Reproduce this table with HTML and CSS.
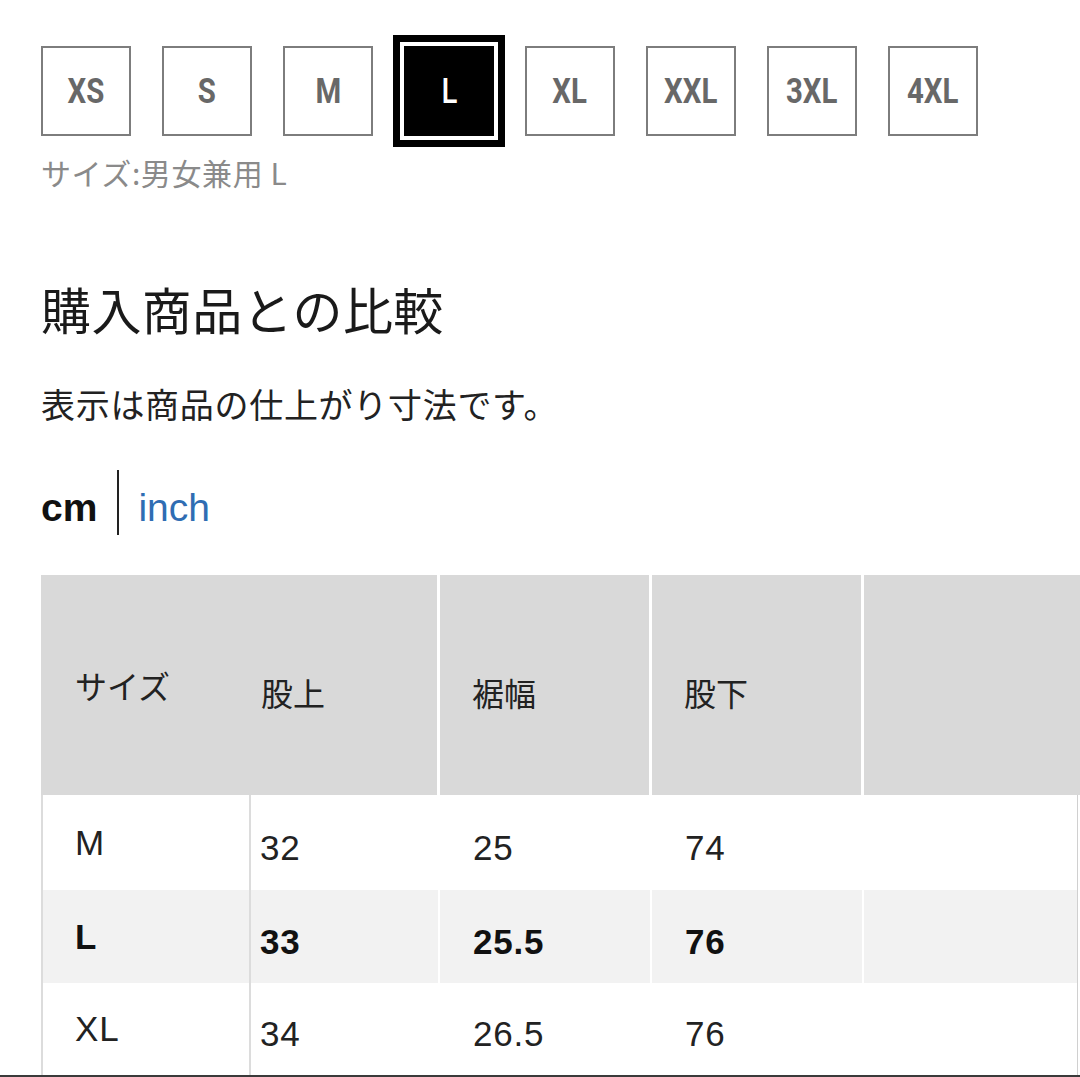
FILE: index.html
```html
<!DOCTYPE html>
<html lang="ja">
<head>
<meta charset="utf-8">
<title>サイズ</title>
<link rel="stylesheet" href="styles.css">
</head>
<body>
<div class="page">
  <div class="sizes">
    <div class="size"><span class="size-label">XS</span></div>
    <div class="size"><span class="size-label">S</span></div>
    <div class="size"><span class="size-label">M</span></div>
    <div class="size size-active"><span class="size-label">L</span></div>
    <div class="size"><span class="size-label">XL</span></div>
    <div class="size"><span class="size-label">XXL</span></div>
    <div class="size"><span class="size-label">3XL</span></div>
    <div class="size"><span class="size-label">4XL</span></div>
  </div>
  <p class="caption">サイズ:男女兼用 L</p>
  <h2 class="heading">購入商品との比較</h2>
  <p class="note">表示は商品の仕上がり寸法です。</p>
  <div class="units">
    <span class="unit unit-on">cm</span>
    <span class="unit-sep"></span>
    <span class="unit unit-link">inch</span>
  </div>
  <div class="chart">
    <div class="chart-head">
      <div class="hcell hcell-first">サイズ</div>
      <div class="hcell hcell-pad hcell-second">股上</div>
      <div class="hcell hcell-pad">裾幅</div>
      <div class="hcell hcell-pad">股下</div>
      <div class="hcell hcell-last"></div>
    </div>
    <div class="chart-body">
      <div class="row row-m">
        <div class="cell cell-first">M</div>
        <div class="cell cell-val cell-second">32</div>
        <div class="cell cell-val">25</div>
        <div class="cell cell-val">74</div>
        <div class="cell cell-last"></div>
      </div>
      <div class="row row-l row-current">
        <div class="cell cell-first">L</div>
        <div class="cell cell-val cell-second">33</div>
        <div class="cell cell-val">25.5</div>
        <div class="cell cell-val">76</div>
        <div class="cell cell-last"></div>
      </div>
      <div class="row row-xl">
        <div class="cell cell-first">XL</div>
        <div class="cell cell-val cell-second">34</div>
        <div class="cell cell-val">26.5</div>
        <div class="cell cell-val">76</div>
        <div class="cell cell-last"></div>
      </div>
    </div>
  </div>
</div>
<div class="edge"></div>
</body>
</html>
```

FILE: styles.css
```css
* { box-sizing: border-box; }

html, body {
  margin: 0;
  padding: 0;
  background: #fff;
}

body {
  width: 1080px;
  height: 1077px;
  overflow: hidden;
  font-family: "Noto Sans CJK JP", "Liberation Sans", sans-serif;
  color: #222;
}

.page {
  padding: 46px 0 0 41px;
}

/* size selector */
.sizes {
  display: flex;
  gap: 31px;
}

.size {
  width: 90px;
  height: 90px;
  border: 2px solid #7d7d7d;
  display: flex;
  align-items: center;
  justify-content: center;
  background: #fff;
}

.size-label {
  display: inline-block;
  font-family: Roboto, "Liberation Sans", sans-serif;
  font-weight: 700;
  font-size: 35px;
  line-height: 1;
  color: #686868;
  transform: scaleX(0.84);
}

.size-active {
  background: #000;
  border-color: #000;
  box-shadow: 0 0 0 4px #fff, 0 0 0 11px #000;
}

.size-active .size-label {
  color: #fff;
  font-weight: 500;
}

.caption {
  margin: 16px 0 0;
  font-size: 30px;
  line-height: 40px;
  letter-spacing: 0.6px;
  color: #8a8a8a;
}

.heading {
  margin: 86px 0 0;
  font-size: 50px;
  line-height: 60px;
  letter-spacing: 0.4px;
  font-weight: 400;
  color: #1a1a1a;
}

.note {
  margin: 44px 0 0;
  font-size: 34px;
  line-height: 44px;
  letter-spacing: 0.7px;
  color: #222;
}

/* units */
.units {
  margin-top: 44px;
  height: 65px;
  display: flex;
  align-items: flex-start;
}

.unit {
  font-family: "Liberation Sans", Arial, sans-serif;
  font-size: 39px;
  line-height: 39px;
  margin-top: 18px;
}

.unit-on {
  font-weight: 700;
  color: #111;
}

.unit-sep {
  width: 2px;
  height: 65px;
  background: #222;
  margin: 0 19px 0 20px;
}

.unit-link {
  color: #2f6db3;
}

/* chart */
.chart {
  margin-top: 40px;
  width: 1039px;
}

.chart-head,
.row {
  display: grid;
  grid-template-columns: 210px 189px 212px 212px 1fr;
}

.chart-head {
  height: 220px;
  background: #d9d9d9;
}

.hcell {
  display: flex;
  align-items: center;
  font-size: 32px;
  color: #222;
  border-right: 3px solid #fff;
  padding-left: 32px;
}

.hcell-first {
  border-right: none;
  padding-left: 34px;
}

.hcell-pad {
  padding-top: 14px;
}

.hcell-second {
  padding-left: 10px;
}

.hcell-last {
  border-right: none;
}

.chart-body {
  width: 1037px;
  border-right: 1px solid #d0d0d0;
}

.row-m { height: 95px; }
.row-l { height: 93px; }
.row-xl { height: 92px; }

.row-current {
  background: #f2f2f2;
}

.cell {
  display: flex;
  align-items: center;
  font-family: "Liberation Sans", Arial, sans-serif;
  font-size: 35px;
  letter-spacing: 0.8px;
  color: #222;
  border-right: 2px solid #fff;
  padding-left: 33px;
}

.cell-first {
  border-left: 2px solid #dcdcdc;
  border-right: 2px solid #dcdcdc;
  padding-left: 32px;
}

.cell-val {
  padding-top: 10px;
}

.cell-second {
  padding-left: 9px;
}

.cell-last {
  border-right: none;
}

.row-current .cell {
  font-weight: 700;
  color: #111;
}

.row-current .cell-first {
  border-right-color: #dcdcdc;
}

.edge {
  width: 1080px;
  height: 2px;
  background: #3a3a3a;
}
```
